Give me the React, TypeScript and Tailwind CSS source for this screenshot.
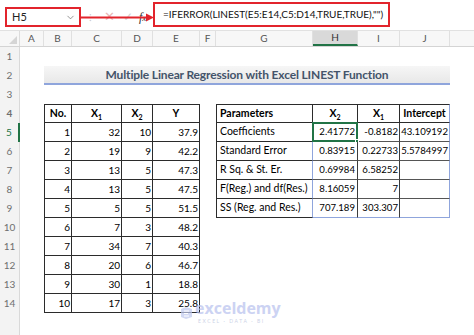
import React from "react";
import { ChevronDown } from "lucide-react";

const W = {
  hdr: "w-[20px]",
  A: "w-[24px]",
  B: "w-[28px]",
  C: "w-[50px]",
  D: "w-[31px]",
  E: "w-[47px]",
  F: "w-[16px]",
  G: "w-[97px]",
  H: "w-[45px]",
  I: "w-[42px]",
  J: "w-[50px]",
};

const leftData = [
  [1, 32, 10, "37.9"],
  [2, 19, 9, "42.2"],
  [3, 13, 5, "47.3"],
  [4, 13, 5, "47.5"],
  [5, 5, 5, "51.5"],
  [6, 7, 3, "48.2"],
  [7, 34, 7, "40.3"],
  [8, 20, 6, "46.7"],
  [9, 30, 1, "18.8"],
  [10, 17, 3, "25.8"],
];

const rightData = [
  ["Coefficients", "2.41772", "-0.8182", "43.109192"],
  ["Standard Error", "0.83915", "0.22733", "5.5784997"],
  ["R Sq. & St. Er.", "0.69984", "6.58252", ""],
  ["F(Reg.) and df(Res.)", "8.16059", "7", ""],
  ["SS (Reg. and Res.)", "707.189", "303.307", ""],
];

const cols = ["A", "B", "C", "D", "E", "F", "G", "H", "I", "J"] as const;

const Cell = ({
  w,
  className = "",
  children,
}: {
  w: string;
  className?: string;
  children?: React.ReactNode;
}) => (
  <div className={`${w} shrink-0 h-full flex items-center ${className}`}>
    {children}
  </div>
);

const RowHead = ({ n, active }: { n?: number; active?: boolean }) => (
  <div
    className={`w-[20px] shrink-0 h-full flex items-center justify-center text-[10px] text-[#6f6f6f] bg-[#f3f3f3] ${
      active ? "border-r-2 border-[#217346] bg-[#dcdcdc] text-[#217346]" : "border-r border-[#d9d9d9]"
    }`}
  >
    {n}
  </div>
);

const Sub = ({ n }: { n: number }) => (
  <span>
    X<sub className="text-[7px] align-[-2px]">{n}</sub>
  </span>
);

const Watermark = () => (
  <div className="absolute left-[180px] top-[301px] flex items-start gap-[2px] opacity-70 pointer-events-none">
    <svg width="13" height="14" viewBox="0 0 13 14" className="mt-[5px]">
      <path d="M1 3 L6 1 L12 3 L12 11 L6 13 L1 11 Z" fill="#c0c9ee" />
      <path d="M4 5 H9 M4 7.5 H8 M4 10 H9" stroke="#ffffff" strokeWidth="1.2" />
    </svg>
    <div className="flex flex-col items-start">
      <span className="h-[15px] leading-[15px] text-[16px] font-bold text-[#b7c1ee] font-['Open_Sans',sans-serif]">
        exceldemy
      </span>
      <span className="h-[6px] leading-[6px] text-[5px] text-[#b8bfdc] tracking-[1.6px] mt-[2px] ml-[3px]">
        EXCEL · DATA · BI
      </span>
    </div>
  </div>
);

export default function App() {
  return (
    <div className="relative w-[474px] h-[335px] overflow-hidden bg-white font-['Lato','Liberation_Sans',sans-serif] text-[10.5px] text-black">
      {/* formula bar */}
      <div className="relative h-[31px] flex items-end pb-[3px] bg-white border-b border-[#e1e1e1]">
        <div className="ml-[5px] w-[76px] h-[20px] border-2 border-[#e2242c] flex items-center justify-between pl-[5px] pr-[3px] text-[11px] text-[#222]">
          <span>H5</span>
          <ChevronDown className="w-[11px] h-[11px] text-[#666]" strokeWidth={1.5} />
        </div>
        <div className="w-[72px] h-[20px] flex items-center text-[#bbb]">
          <span className="ml-[8px] text-[10px] leading-none text-[#c8c8c8]">⁝</span>
          <span className="ml-[12px] text-[13px] text-[#e8b7b7]">✕</span>
          <span className="ml-[8px] text-[12px] text-[#d2d2d2]">✓</span>
          <span className="ml-[6px] text-[12px] italic text-[#333] font-['Liberation_Serif',serif]">
            f<span className="text-[9px]">x</span>
          </span>
        </div>
        <div className="w-[237px] h-[25px] border-2 border-[#e2242c] flex items-center pl-[8px] text-[10px] text-[#111]">
          =IFERROR(LINEST(E5:E14,C5:D14,TRUE,TRUE),"")
        </div>
        <svg
          className="absolute left-[81px] top-[13px]"
          width="74"
          height="9"
          viewBox="0 0 74 9"
        >
          <line x1="0" y1="4.5" x2="67" y2="4.5" stroke="#e2242c" strokeWidth="2" />
          <path d="M65 0.5 L73 4.5 L65 8.5 Z" fill="#e2242c" />
        </svg>
      </div>

      {/* column headers */}
      <div className="flex h-[16px] bg-[#f7f7f7] border-b border-[#d4d4d4] text-[10px] text-[#555]">
        <div className="w-[20px] shrink-0 h-full relative border-r border-[#dcdcdc]">
          <svg className="absolute right-[2px] bottom-[2px]" width="8" height="8" viewBox="0 0 8 8">
            <path d="M8 0 L8 8 L0 8 Z" fill="#d5d5d5" />
          </svg>
        </div>
        {cols.map((c) => (
          <Cell
            key={c}
            w={W[c]}
            className={`justify-center border-r border-[#e0e0e0] ${
              c === "H" ? "bg-[#d9d9d9] border-b-2 border-b-[#217346] text-[#333]" : ""
            }`}
          >
            {c}
          </Cell>
        ))}
        <div className="flex-1" />
      </div>

      {/* row 1 */}
      <div className="flex h-[19px]">
        <RowHead n={1} />
      </div>

      {/* row 2: title */}
      <div className="flex h-[19px]">
        <RowHead n={2} />
        <Cell w={W.A} />
        <div className="w-[406px] shrink-0 h-full flex items-center justify-center bg-gradient-to-b from-[#f6f6f6] to-[#e8e8e8] border-b-2 border-[#8fa5dc] text-[12px] tracking-[-0.15px] font-bold text-[#44546a]">
          Multiple Linear Regression with Excel LINEST Function
        </div>
      </div>

      {/* row 3 */}
      <div className="flex h-[19px]">
        <RowHead n={3} />
      </div>

      {/* row 4: headers */}
      <div className="flex h-[19px] font-bold">
        <RowHead n={4} />
        <Cell w={W.A} />
        <Cell w={W.B} className="justify-center border border-[#2b2b2b]">
          No.
        </Cell>
        <Cell w={W.C} className="justify-center border-y border-r border-[#2b2b2b]">
          <Sub n={1} />
        </Cell>
        <Cell w={W.D} className="justify-center border-y border-r border-[#2b2b2b]">
          <Sub n={2} />
        </Cell>
        <Cell w={W.E} className="justify-center border-y border-r border-[#2b2b2b]">
          Y
        </Cell>
        <Cell w={W.F} />
        <Cell w={W.G} className="pl-[3px] border border-[#2b2b2b]">
          Parameters
        </Cell>
        <Cell w={W.H} className="justify-center border-y border-r border-[#2b2b2b]">
          <Sub n={2} />
        </Cell>
        <Cell w={W.I} className="justify-center border-y border-r border-[#2b2b2b]">
          <Sub n={1} />
        </Cell>
        <Cell w={W.J} className="justify-center border-y border-r border-[#2b2b2b] border-r-[#8fa5dc]">
          Intercept
        </Cell>
      </div>

      {/* rows 5-14 */}
      {leftData.map((r, i) => {
        const rr = rightData[i];
        const last = i === rightData.length - 1;
        return (
          <div key={i} className="flex h-[19px] text-[10px]">
            <RowHead n={5 + i} active={i === 0} />
            <Cell w={W.A} />
            <Cell w={W.B} className="justify-end pr-[1px] border-x border-b border-[#2b2b2b]">
              {r[0]}
            </Cell>
            <Cell w={W.C} className="justify-end pr-[1px] border-r border-b border-[#2b2b2b]">
              {r[1]}
            </Cell>
            <Cell w={W.D} className="justify-end pr-[1px] border-r border-b border-[#2b2b2b]">
              {r[2]}
            </Cell>
            <Cell w={W.E} className="justify-end pr-[1px] border-r border-b border-[#2b2b2b]">
              {r[3]}
            </Cell>
            <Cell w={W.F} />
            {rr && (
              <>
                <Cell w={W.G} className="pl-[3px] text-[10.5px] border-x border-b border-[#2b2b2b] border-r-[#8fa5dc]">
                  {rr[0]}
                </Cell>
                <Cell
                  w={W.H}
                  className={`relative justify-end pr-[2px] text-[9.6px] border-r border-b border-[#555] border-r-[#3c3c3c] ${
                    last ? "border-b-[#8fa5dc]" : ""
                  }`}
                >
                  {rr[1]}
                  {i === 0 && (
                    <div className="absolute -left-[1px] -top-[1px] -right-[1px] -bottom-[1px] border-2 border-[#217346]">
                      <div className="absolute -right-[3px] -bottom-[3px] w-[4px] h-[4px] bg-[#217346] border border-white" />
                    </div>
                  )}
                </Cell>
                <Cell
                  w={W.I}
                  className={`justify-end pr-[1px] text-[9.6px] border-r border-b border-[#555] border-r-[#3c3c3c] ${
                    last ? "border-b-[#8fa5dc]" : ""
                  }`}
                >
                  {rr[2]}
                </Cell>
                <Cell
                  w={W.J}
                  className={`justify-end pr-[1px] text-[9.6px] border-r border-b border-[#8fa5dc] ${
                    last ? "" : "border-b-[#555]"
                  }`}
                >
                  {rr[3]}
                </Cell>
              </>
            )}
          </div>
        );
      })}

      {/* rows 15+ */}
      <div className="flex h-[40px]">
        <RowHead />
      </div>

      <Watermark />
    </div>
  );
}
